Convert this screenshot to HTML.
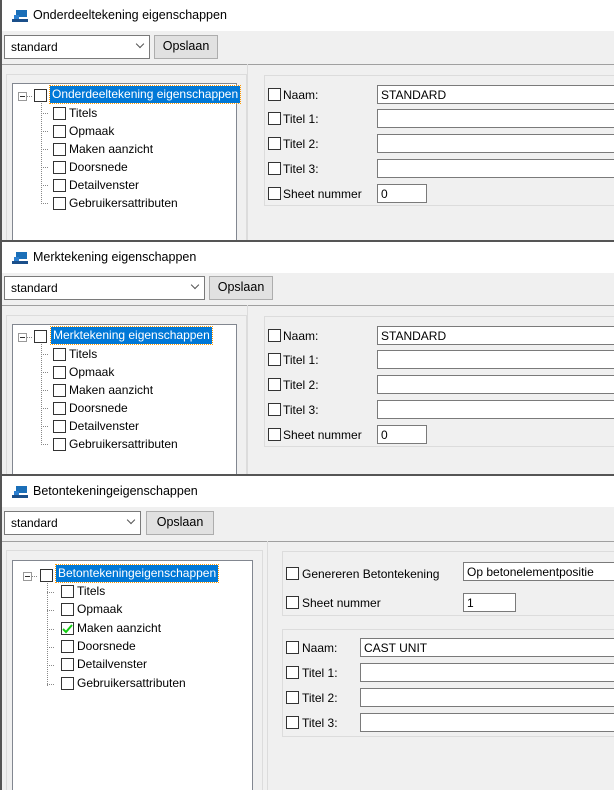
<!DOCTYPE html><html><head><meta charset="utf-8"><style>
*{box-sizing:border-box;margin:0;padding:0}
body{width:614px;height:790px;position:relative;overflow:hidden;background:#f0f0f0;font-family:"Liberation Sans",sans-serif;font-size:12px;color:#000}
div,span,svg{position:absolute}
.win{left:0;width:614px;background:#f0f0f0;border-left:2px solid #555;overflow:hidden}
.tb{left:0;top:0;width:614px;height:31px;background:#fff}
.tt{left:31px;top:8px;font-size:12.5px}
.ic{left:10px;top:10px;width:16px;height:12px}
.combo{background:#fff;border:1px solid #7a7a7a;height:24px}
.combo span{left:6px;top:4px}
.combo i{position:absolute;right:6px;top:5px;width:6px;height:6px;border-right:1px solid #555;border-bottom:1px solid #555;transform:rotate(45deg)}
.btn{background:#e1e1e1;border:1px solid #adadad;height:24px;text-align:center;line-height:21px;font-size:12.5px}
.sep{left:0;width:614px;height:1px;background:#a0a0a0}
.grp{border:1px solid #dcdcdc}
.tree{background:#fff;border:1px solid #828790;border-bottom:none}
.cb{width:13px;height:13px;border:1px solid #333;background:#fff}
.hl{background:#0078d7;color:#fff;height:17px;padding:1px 2px;outline:1px dotted #f90;white-space:nowrap}
.in{background:#fff;border:1px solid #7a7a7a;height:19px;padding:2px 3px 1px}
.dl{border-left:1px dotted #888;width:1px}
.dh{border-top:1px dotted #888;height:1px;width:7px}
.mn{width:9px;height:9px;border:1px solid #999;background:#fff}
.mn:after{content:"";position:absolute;left:1px;top:3px;width:5px;height:1px;background:#333}
</style></head><body>

<!-- WINDOW 1 -->
<div class="win" style="top:0;height:242px">
<div class="tb"><svg class="ic" viewBox="0 0 16 12"><rect x="4" y="0" width="11" height="7" fill="#1b6fb8"/><rect x="0" y="9" width="16" height="3" fill="#1b4f8a"/><rect x="2" y="5" width="5" height="4" fill="#2b7fd0"/></svg><span class="tt">Onderdeeltekening eigenschappen</span></div>
<div class="combo" style="left:2px;top:35px;width:146px"><span>standard</span><i></i></div>
<div class="btn" style="left:152px;top:35px;width:64px">Opslaan</div>
<div class="sep" style="top:64px"></div>
<div class="grp" style="left:4px;top:74px;width:241px;height:180px"></div>
<div class="tree" style="left:10px;top:83px;width:225px;height:170px">
 <div class="mn" style="left:5px;top:8px"></div><div class="dh" style="left:14px;top:12px;width:5px"></div>
 <div class="cb" style="left:21px;top:5px"></div>
 <div class="hl" style="left:37px;top:2px">Onderdeeltekening eigenschappen</div>
 <div class="dl" style="left:28px;top:19px;height:101px"></div>
 <div class="dh" style="left:28px;top:29px"></div><div class="cb" style="left:40px;top:23px"></div><span style="left:56px;top:22px">Titels</span>
 <div class="dh" style="left:28px;top:47px"></div><div class="cb" style="left:40px;top:41px"></div><span style="left:56px;top:40px">Opmaak</span>
 <div class="dh" style="left:28px;top:65px"></div><div class="cb" style="left:40px;top:59px"></div><span style="left:56px;top:58px">Maken aanzicht</span>
 <div class="dh" style="left:28px;top:83px"></div><div class="cb" style="left:40px;top:77px"></div><span style="left:56px;top:76px">Doorsnede</span>
 <div class="dh" style="left:28px;top:101px"></div><div class="cb" style="left:40px;top:95px"></div><span style="left:56px;top:94px">Detailvenster</span>
 <div class="dh" style="left:28px;top:119px"></div><div class="cb" style="left:40px;top:113px"></div><span style="left:56px;top:112px">Gebruikersattributen</span>
</div>
<div style="left:245px;top:64px;width:18px;height:178px;border-left:1px solid #dcdcdc"></div>
<div class="grp" style="left:262px;top:75px;width:360px;height:131px"></div>
<div class="cb" style="left:266px;top:88px"></div><span style="left:281px;top:88px">Naam:</span><div class="in" style="left:375px;top:85px;width:250px">STANDARD</div>
<div class="cb" style="left:266px;top:112px"></div><span style="left:281px;top:112px">Titel 1:</span><div class="in" style="left:375px;top:109px;width:250px"></div>
<div class="cb" style="left:266px;top:137px"></div><span style="left:281px;top:137px">Titel 2:</span><div class="in" style="left:375px;top:134px;width:250px"></div>
<div class="cb" style="left:266px;top:162px"></div><span style="left:281px;top:162px">Titel 3:</span><div class="in" style="left:375px;top:159px;width:250px"></div>
<div class="cb" style="left:266px;top:187px"></div><span style="left:281px;top:187px">Sheet nummer</span><div class="in" style="left:375px;top:184px;width:50px">0</div>
<div style="left:0;top:240px;width:614px;height:2px;background:#555"></div>
</div>

<!-- WINDOW 2 -->
<div class="win" style="top:242px;height:234px">
<div class="tb"><svg class="ic" viewBox="0 0 16 12"><rect x="4" y="0" width="11" height="7" fill="#1b6fb8"/><rect x="0" y="9" width="16" height="3" fill="#1b4f8a"/><rect x="2" y="5" width="5" height="4" fill="#2b7fd0"/></svg><span class="tt">Merktekening eigenschappen</span></div>
<div class="combo" style="left:2px;top:34px;width:201px"><span>standard</span><i></i></div>
<div class="btn" style="left:207px;top:34px;width:64px">Opslaan</div>
<div class="sep" style="top:63px"></div>
<div class="grp" style="left:4px;top:73px;width:241px;height:180px"></div>
<div class="tree" style="left:10px;top:82px;width:225px;height:170px">
 <div class="mn" style="left:5px;top:8px"></div><div class="dh" style="left:14px;top:12px;width:5px"></div>
 <div class="cb" style="left:21px;top:5px"></div>
 <div class="hl" style="left:38px;top:2px">Merktekening eigenschappen</div>
 <div class="dl" style="left:28px;top:19px;height:101px"></div>
 <div class="dh" style="left:28px;top:29px"></div><div class="cb" style="left:40px;top:23px"></div><span style="left:56px;top:22px">Titels</span>
 <div class="dh" style="left:28px;top:47px"></div><div class="cb" style="left:40px;top:41px"></div><span style="left:56px;top:40px">Opmaak</span>
 <div class="dh" style="left:28px;top:65px"></div><div class="cb" style="left:40px;top:59px"></div><span style="left:56px;top:58px">Maken aanzicht</span>
 <div class="dh" style="left:28px;top:83px"></div><div class="cb" style="left:40px;top:77px"></div><span style="left:56px;top:76px">Doorsnede</span>
 <div class="dh" style="left:28px;top:101px"></div><div class="cb" style="left:40px;top:95px"></div><span style="left:56px;top:94px">Detailvenster</span>
 <div class="dh" style="left:28px;top:119px"></div><div class="cb" style="left:40px;top:113px"></div><span style="left:56px;top:112px">Gebruikersattributen</span>
</div>
<div style="left:245px;top:63px;width:18px;height:178px;border-left:1px solid #dcdcdc"></div>
<div class="grp" style="left:262px;top:74px;width:360px;height:131px"></div>
<div class="cb" style="left:266px;top:87px"></div><span style="left:281px;top:87px">Naam:</span><div class="in" style="left:375px;top:84px;width:250px">STANDARD</div>
<div class="cb" style="left:266px;top:111px"></div><span style="left:281px;top:111px">Titel 1:</span><div class="in" style="left:375px;top:108px;width:250px"></div>
<div class="cb" style="left:266px;top:136px"></div><span style="left:281px;top:136px">Titel 2:</span><div class="in" style="left:375px;top:133px;width:250px"></div>
<div class="cb" style="left:266px;top:161px"></div><span style="left:281px;top:161px">Titel 3:</span><div class="in" style="left:375px;top:158px;width:250px"></div>
<div class="cb" style="left:266px;top:186px"></div><span style="left:281px;top:186px">Sheet nummer</span><div class="in" style="left:375px;top:183px;width:50px">0</div>
<div style="left:0;top:232px;width:614px;height:2px;background:#555"></div>
</div>

<!-- WINDOW 3 -->
<div class="win" style="top:476px;height:314px">
<div class="tb"><svg class="ic" viewBox="0 0 16 12"><rect x="4" y="0" width="11" height="7" fill="#1b6fb8"/><rect x="0" y="9" width="16" height="3" fill="#1b4f8a"/><rect x="2" y="5" width="5" height="4" fill="#2b7fd0"/></svg><span class="tt">Betontekeningeigenschappen</span></div>
<div class="combo" style="left:2px;top:35px;width:137px"><span>standard</span><i></i></div>
<div class="btn" style="left:144px;top:35px;width:68px">Opslaan</div>
<div class="sep" style="top:65px"></div>
<div class="grp" style="left:4px;top:74px;width:257px;height:250px"></div>
<div class="tree" style="left:10px;top:84px;width:241px;height:240px">
 <div class="mn" style="left:10px;top:11px"></div><div class="dh" style="left:19px;top:15px;width:5px"></div>
 <div class="cb" style="left:27px;top:8px"></div>
 <div class="hl" style="left:43px;top:4px">Betontekeningeigenschappen</div>
 <div class="dl" style="left:34px;top:22px;height:103px"></div>
 <div class="dh" style="left:34px;top:31px"></div><div class="cb" style="left:48px;top:24px"></div><span style="left:64px;top:23px">Titels</span>
 <div class="dh" style="left:34px;top:49px"></div><div class="cb" style="left:48px;top:42px"></div><span style="left:64px;top:41px">Opmaak</span>
 <div class="dh" style="left:34px;top:68px"></div><div class="cb" style="left:48px;top:61px"><svg width="11" height="11" style="left:0;top:0"><path d="M1 6 L4 9 L10 2" stroke="#1c1" stroke-width="2" fill="none"/></svg></div><span style="left:64px;top:60px">Maken aanzicht</span>
 <div class="dh" style="left:34px;top:86px"></div><div class="cb" style="left:48px;top:79px"></div><span style="left:64px;top:78px">Doorsnede</span>
 <div class="dh" style="left:34px;top:104px"></div><div class="cb" style="left:48px;top:97px"></div><span style="left:64px;top:96px">Detailvenster</span>
 <div class="dh" style="left:34px;top:123px"></div><div class="cb" style="left:48px;top:116px"></div><span style="left:64px;top:115px">Gebruikersattributen</span>
</div>
<div style="left:265px;top:65px;width:18px;height:260px;border-left:1px solid #dcdcdc"></div>
<div class="grp" style="left:280px;top:75px;width:340px;height:65px"></div>
<div class="cb" style="left:284px;top:91px"></div><span style="left:300px;top:91px">Genereren Betontekening</span><div class="in" style="left:461px;top:86px;width:160px">Op betonelementpositie</div>
<div class="cb" style="left:284px;top:120px"></div><span style="left:300px;top:120px">Sheet nummer</span><div class="in" style="left:461px;top:117px;width:53px">1</div>
<div class="grp" style="left:280px;top:153px;width:340px;height:108px"></div>
<div class="cb" style="left:284px;top:165px"></div><span style="left:300px;top:165px">Naam:</span><div class="in" style="left:358px;top:162px;width:260px">CAST UNIT</div>
<div class="cb" style="left:284px;top:190px"></div><span style="left:300px;top:190px">Titel 1:</span><div class="in" style="left:358px;top:187px;width:260px"></div>
<div class="cb" style="left:284px;top:215px"></div><span style="left:300px;top:215px">Titel 2:</span><div class="in" style="left:358px;top:212px;width:260px"></div>
<div class="cb" style="left:284px;top:240px"></div><span style="left:300px;top:240px">Titel 3:</span><div class="in" style="left:358px;top:237px;width:260px"></div>
</div>
</body></html>
